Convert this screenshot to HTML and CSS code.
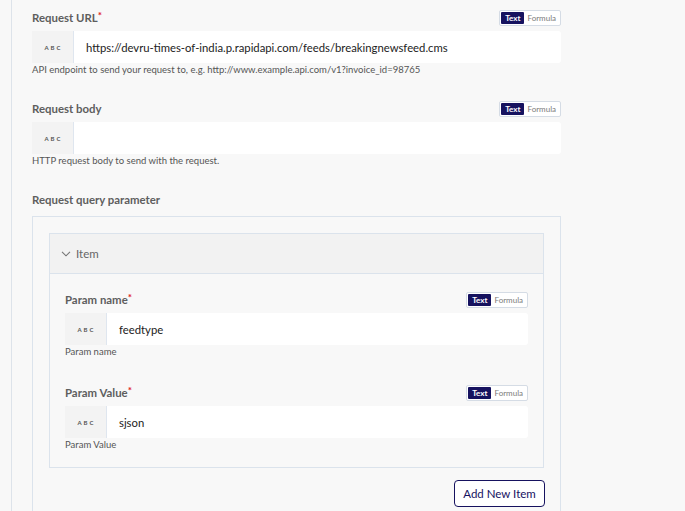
FILE: index.html
```html
<!DOCTYPE html>
<html>
<head>
<meta charset="utf-8">
<link rel="stylesheet" href="styles.css">
</head>
<body>
<div class="panel">
  <div class="field">
    <div class="field-head">
      <span class="label">Request URL<span class="req">*</span></span>
      <span class="toggle"><span class="opt active">Text</span><span class="opt">Formula</span></span>
    </div>
    <div class="input">
      <span class="type">ABC</span>
      <span class="value">https://devru-times-of-india.p.rapidapi.com/feeds/breakingnewsfeed.cms</span>
    </div>
    <div class="help">API endpoint to send your request to, e.g. http://www.example.api.com/v1?invoice_id=98765</div>
  </div>

  <div class="field">
    <div class="field-head">
      <span class="label">Request body</span>
      <span class="toggle"><span class="opt active">Text</span><span class="opt">Formula</span></span>
    </div>
    <div class="input">
      <span class="type">ABC</span>
      <span class="value"></span>
    </div>
    <div class="help">HTTP request body to send with the request.</div>
  </div>

  <div class="section">
    <div class="section-label">Request query parameter</div>
    <div class="list-box">
      <div class="item">
        <div class="item-head">
          <svg class="chev" width="10" height="6" viewBox="0 0 10 6"><path d="M1 0.8 L5 4.8 L9 0.8" fill="none" stroke="#777" stroke-width="1.1"/></svg>
          <span>Item</span>
        </div>
        <div class="item-body">
          <div class="field sub">
            <div class="field-head">
              <span class="label">Param name<span class="req">*</span></span>
              <span class="toggle"><span class="opt active">Text</span><span class="opt">Formula</span></span>
            </div>
            <div class="input">
              <span class="type">ABC</span>
              <span class="value">feedtype</span>
            </div>
            <div class="help">Param name</div>
          </div>
          <div class="field sub last">
            <div class="field-head">
              <span class="label">Param Value<span class="req">*</span></span>
              <span class="toggle"><span class="opt active">Text</span><span class="opt">Formula</span></span>
            </div>
            <div class="input">
              <span class="type">ABC</span>
              <span class="value">sjson</span>
            </div>
            <div class="help">Param Value</div>
          </div>
        </div>
      </div>
      <div class="actions">
        <button class="add-btn">Add New Item</button>
      </div>
    </div>
  </div>
</div>
</body>
</html>
```

FILE: styles.css
```css
html, body {
  margin: 0;
  padding: 0;
  background: #f8f8f8;
  font-family: Lato, "Noto Sans", sans-serif;
  color: #333;
}

body {
  height: 511px;
  overflow: hidden;
}

.panel {
  margin-left: 11px;
  border-left: 1px solid #dde3ea;
  padding: 10px 0 0 20px;
  width: 529px;
  min-height: 600px;
}

.field {
  margin-bottom: 24px;
}

.field-head {
  display: flex;
  justify-content: space-between;
  align-items: center;
  height: 15px;
  margin-bottom: 6px;
}

.label, .section-label {
  font-size: 11.4px;
  font-weight: 700;
  color: #5e5e5e;
  line-height: 15px;
}

.req {
  color: #e0201c;
  font-size: 10px;
  vertical-align: top;
  position: relative;
  top: -2px;
}

.toggle {
  display: flex;
  align-items: center;
  height: 14px;
  padding: 0 1px;
  border: 1px solid #d5dce5;
  border-radius: 2px;
  background: #fff;
  font-size: 8px;
  line-height: 12px;
}

.opt {
  padding: 0 3px;
  color: #7a7a7a;
}

.opt.active {
  background: #16125f;
  color: #fff;
  font-weight: 700;
  border-radius: 1px;
  padding: 0 4px;
}

.input {
  display: flex;
  align-items: center;
  height: 32px;
  background: #fff;
  border-radius: 3px;
}

.type {
  width: 39px;
  height: 100%;
  display: flex;
  align-items: center;
  justify-content: center;
  background: #f3f3f3;
  border-right: 1px solid #dfe6ef;
  font-size: 6px;
  font-weight: 700;
  letter-spacing: 2px;
  color: #555;
  padding-left: 2px;
  box-sizing: content-box;
}

.value {
  padding-left: 12px;
  font-size: 11.3px;
  color: #222;
}

.help {
  font-size: 9.5px;
  line-height: 14px;
  color: #555;
}

.section-label {
  margin-bottom: 9px;
}

.list-box {
  border: 1px solid #dbe3ec;
  border-bottom: none;
  padding: 16px 16px 0 16px;
  min-height: 320px;
}

.item {
  border: 1px solid #dbe3ec;
}

.item-head {
  height: 39px;
  display: flex;
  align-items: center;
  padding-left: 11px;
  background: #f2f2f2;
  border-bottom: 1px solid #dbe3ec;
  font-size: 11.5px;
  color: #666;
}

.chev {
  margin-right: 5px;
}

.item-body {
  padding: 18px 15px 15px 15px;
}

.field.sub {
  margin-bottom: 26px;
}

.field.sub.last {
  margin-bottom: 0;
}

.actions {
  display: flex;
  justify-content: flex-end;
  margin-top: 12px;
  margin-right: -1px;
}

.add-btn {
  height: 27px;
  width: 91px;
  border: 1px solid #16125f;
  border-radius: 4px;
  background: #fff;
  color: #16125f;
  font-family: Lato, "Noto Sans", sans-serif;
  font-size: 11.5px;
  padding: 0;
}
```
